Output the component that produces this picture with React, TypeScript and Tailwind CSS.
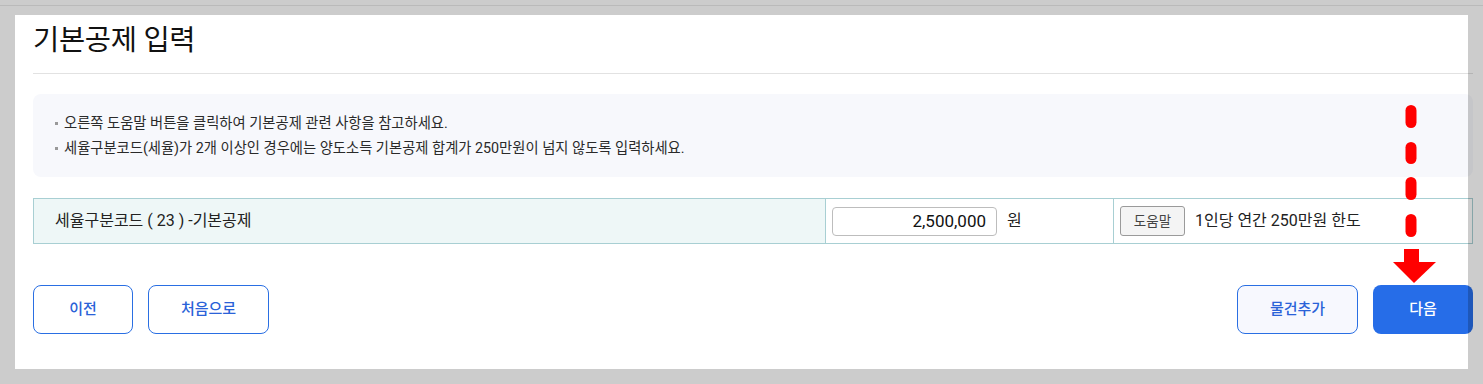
import React from "react";

const font = { fontFamily: 'Roboto, "Noto Sans CJK KR", sans-serif' };

const notes = [
  "오른쪽 도움말 버튼을 클릭하여 기본공제 관련 사항을 참고하세요.",
  "세율구분코드(세율)가 2개 이상인 경우에는 양도소득 기본공제 합계가 250만원이 넘지 않도록 입력하세요.",
];

function RedArrow() {
  return (
    <svg
      className="absolute left-[1390px] top-[100px] z-20"
      width="50"
      height="190"
      viewBox="0 0 50 190"
    >
      <g stroke="#ff0000" strokeWidth="11" strokeLinecap="round">
        <line x1="21" y1="10.5" x2="21" y2="22.5" />
        <line x1="21" y1="47.5" x2="21" y2="58.5" />
        <line x1="21" y1="82.5" x2="21" y2="94.5" />
        <line x1="21" y1="119.5" x2="21" y2="131.5" />
      </g>
      <rect x="14" y="149" width="15" height="15" fill="#ff0000" />
      <polygon points="3,162 46,162 24,183" fill="#ff0000" />
    </svg>
  );
}

export default function App() {
  return (
    <div
      className="relative h-[384px] w-[1483px] overflow-hidden bg-[#cccccc] text-[#222]"
      style={font}
    >
      <div className="absolute left-0 right-0 top-[5px] h-px bg-[#bababa]" />

      <main className="absolute left-[15px] right-0 top-[15px] h-[354px] bg-white pl-[18px] pr-[10px]">
        <h1 className="flex h-[58px] items-center pb-[6px] text-[28.5px] font-normal leading-none tracking-[-0.3px] text-[#111]">
          기본공제 입력
        </h1>
        <hr className="border-0 border-t border-[#e2e2e2]" />

        <section className="mt-[20px] flex h-[83px] flex-col justify-center gap-[7px] rounded-lg bg-[#f7f8fc] pl-[22px] text-[14.3px] text-[#2a2a2a]">
          {notes.map((note) => (
            <p className="flex items-center gap-[6px] leading-[18px]" key={note}>
              <span className="inline-block h-[3px] w-[3px] bg-[#999]" />
              {note}
            </p>
          ))}
        </section>

        <div className="mt-[21px] flex h-[46px] border border-[#a8cfd3] text-[16px]">
          <div className="flex w-[791px] items-center bg-[#eef7f7] pl-[21px] text-[#222]">
            세율구분코드 ( 23 ) -기본공제
          </div>
          <div className="flex w-[288px] items-center gap-[10px] border-l border-[#a8cfd3] pl-[6px]">
            <input
              className="h-[29px] w-[165px] rounded-[4px] border border-[#bdbdbd] px-[10px] text-right text-[17px] text-[#111] outline-none"
              defaultValue="2,500,000"
              style={font}
            />
            <span>원</span>
          </div>
          <div className="flex flex-1 items-center gap-[10px] border-l border-[#a8cfd3] pl-[6px]">
            <button
              className="h-[30px] w-[65px] rounded-[3px] border border-[#9a9a9a] bg-[#f4f4f4] text-[13.5px] text-[#444]"
              type="button"
            >
              도움말
            </button>
            <span>1인당 연간 250만원 한도</span>
          </div>
        </div>

        <div className="mt-[41px] flex justify-between text-[15px] font-medium">
          <div className="flex gap-[15px]">
            <button
              className="h-[49px] w-[100px] rounded-lg border border-[#2a6fe3] bg-white text-[#2a62d8]"
              type="button"
            >
              이전
            </button>
            <button
              className="h-[49px] w-[121px] rounded-lg border border-[#2a6fe3] bg-white text-[#2a62d8]"
              type="button"
            >
              처음으로
            </button>
          </div>
          <div className="flex gap-[15px]">
            <button
              className="h-[49px] w-[121px] rounded-lg border border-[#2a6fe3] bg-[#f7f8fe] text-[#2a62d8]"
              type="button"
            >
              물건추가
            </button>
            <button
              className="h-[49px] w-[100px] rounded-lg bg-[#266de8] text-white"
              type="button"
            >
              다음
            </button>
          </div>
        </div>
      </main>

      <div className="absolute right-0 top-[15px] z-10 h-[354px] w-[15px] bg-black/20" />
      <RedArrow />
    </div>
  );
}
